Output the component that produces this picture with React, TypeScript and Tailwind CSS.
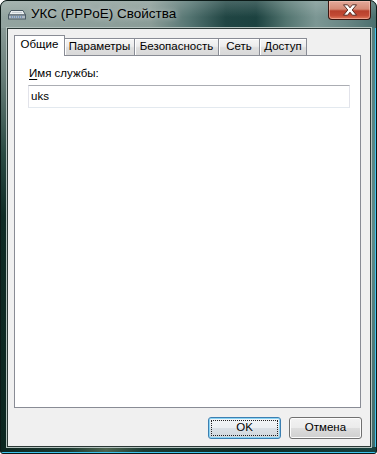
import React from "react";

function NetIcon() {
  return (
    <svg width="18" height="10" viewBox="0 0 18 10">
      <path d="M3 0.5 H15 L17.5 5 H0.5 Z" fill="#e9eef0" stroke="#4a5a64" strokeWidth="1" />
      <rect x="0.5" y="5" width="17" height="4" fill="#aeb9c2" stroke="#4a5a64" strokeWidth="1" />
      <line x1="3" y1="7" x2="15" y2="7" stroke="#3b6fb0" strokeWidth="1" strokeDasharray="1 1" />
      <line x1="4" y1="2.5" x2="14" y2="2.5" stroke="#c4ccd2" strokeWidth="1" />
    </svg>
  );
}

function CloseButton() {
  return (
    <div className="w-[43px] h-[19px] rounded-b-[4px] border border-t-0 border-[#3b1510] bg-[linear-gradient(to_bottom,#e3a99a_0%,#d58a76_45%,#b8402c_55%,#c24a35_80%,#e0795c_100%)] shadow-[inset_0_0_0_1px_rgba(255,210,200,0.45)] flex items-center justify-center">
      <svg width="16" height="12" viewBox="0 0 16 12">
        <path
          d="M1.5 0.8 L5.6 0.8 L8 3.8 L10.4 0.8 L14.5 0.8 L10.2 6 L14.5 11.2 L10.4 11.2 L8 8.2 L5.6 11.2 L1.5 11.2 L5.8 6 Z"
          fill="#ffffff"
          stroke="#4a2018"
          strokeWidth="0.9"
          strokeLinejoin="round"
        />
      </svg>
    </div>
  );
}

function Tab({ label, selected, width }: { label: string; selected?: boolean; width: string }) {
  if (selected) {
    return (
      <div
        className={`relative z-10 h-[21px] -mb-px bg-white border border-b-0 border-[#898c95] flex items-center justify-center pb-[2px] ${width}`}
      >
        {label}
      </div>
    );
  }
  return (
    <div
      className={`-ml-px h-[17px] border border-b-0 border-[#898c95] bg-[linear-gradient(to_bottom,#f6f6f6_0%,#ececec_45%,#dedede_55%,#d9d9d9_100%)] shadow-[inset_1px_1px_0_#ffffff] flex items-center justify-center ${width}`}
    >
      {label}
    </div>
  );
}

export default function App() {
  return (
    <div className="w-[377px] h-[454px] bg-white font-['Liberation_Sans',Arial,sans-serif] text-[11.5px] text-black">
      <div className="w-full h-full rounded-t-[7px] rounded-b-[3px] overflow-hidden border border-[#0c1917] flex flex-col bg-[#0f2a25]">
        {/* Title bar */}
        <div className="h-[27px] flex items-start bg-[linear-gradient(to_bottom,rgba(255,255,255,0.18),rgba(255,255,255,0)_60%),linear-gradient(to_right,#93a4a0_0%,#8a9c97_40%,#557572_50%,#204543_60%,#1c4240_68%,#52746f_76%,#7c9794_84%,#688684_92%,#4b6f6e_100%)]">
          <div className="pt-[9px] pl-[7px]">
            <NetIcon />
          </div>
          <div className="pl-[5px] pt-[5px] text-[13.5px] leading-[16px] [text-shadow:0_0_6px_rgba(255,255,255,0.7)]">
            УКС (PPPoE) Свойства
          </div>
          <div className="flex-1" />
          <div className="mr-[5px]">
            <CloseButton />
          </div>
        </div>

        {/* Middle */}
        <div className="flex flex-1 min-h-0">
          <div className="w-[6px] bg-[linear-gradient(to_bottom,#8a9b97_0%,#667c77_12%,#2a4a43_30%,#0f2b25_45%,#0c2620_100%)]" />

          {/* Client */}
          <div className="relative flex-1 bg-[#f0f0f0] border border-[#2b3836] shadow-[0_0_0_1px_#b3c1bd] flex flex-col pt-[7px] pl-[6px] pr-[9px] pb-[7px]">
            {/* Tab strip */}
            <div className="h-[19px] flex items-end">
              <Tab label="Общие" selected width="w-[51px]" />
              <Tab label="Параметры" width="w-[71px]" />
              <Tab label="Безопасность" width="w-[85px]" />
              <Tab label="Сеть" width="w-[42px]" />
              <Tab label="Доступ" width="w-[48px]" />
            </div>

            {/* Panel */}
            <div className="flex-1 bg-white border border-[#898c95] flex flex-col pt-[10px] pl-[13px] pr-[10px]">
              <div className="pl-[1px] leading-[15px]">
                <span className="underline underline-offset-2">И</span>мя службы:
              </div>
              <div className="mt-[4px] h-[23px] border border-[#e2e3ea] border-t-[#abadb3] border-b-[#e3e9ef] flex items-center pl-[2px]">
                uks
              </div>
            </div>

            {/* Buttons */}
            <div className="mt-[9px] -mr-px flex justify-end gap-[8px]">
              <div className="w-[73px] h-[22px] rounded-[3px] border border-[#3c7fb1] bg-[linear-gradient(to_bottom,#f2f5f7_0%,#ebeff2_50%,#dbe1e6_50%,#cfd6dc_100%)] shadow-[inset_0_0_0_1px_#8ad4f5] p-[2px]">
                <div className="w-full h-full border border-dotted border-[#222] flex items-center justify-center">
                  OK
                </div>
              </div>
              <div className="w-[73px] h-[22px] rounded-[3px] border border-[#707070] bg-[linear-gradient(to_bottom,#f2f2f2_0%,#ebebeb_50%,#dddddd_50%,#cfcfcf_100%)] shadow-[inset_0_0_0_1px_#fcfcfc] flex items-center justify-center">
                Отмена
              </div>
            </div>
          </div>

          <div className="w-[5px] bg-[linear-gradient(to_bottom,#57807f_0%,#5f8b89_50%,#436b6a_100%)] border-r border-r-[#3ec3ee]" />
        </div>

        {/* Bottom */}
        <div className="h-[6px] bg-[linear-gradient(to_right,#0d2520_0%,#1b3a31_18%,#4d6450_28%,#1c3b33_38%,#0e2a25_65%,#17403e_100%)] border-b border-b-[#3ec3ee]" />
      </div>
    </div>
  );
}
